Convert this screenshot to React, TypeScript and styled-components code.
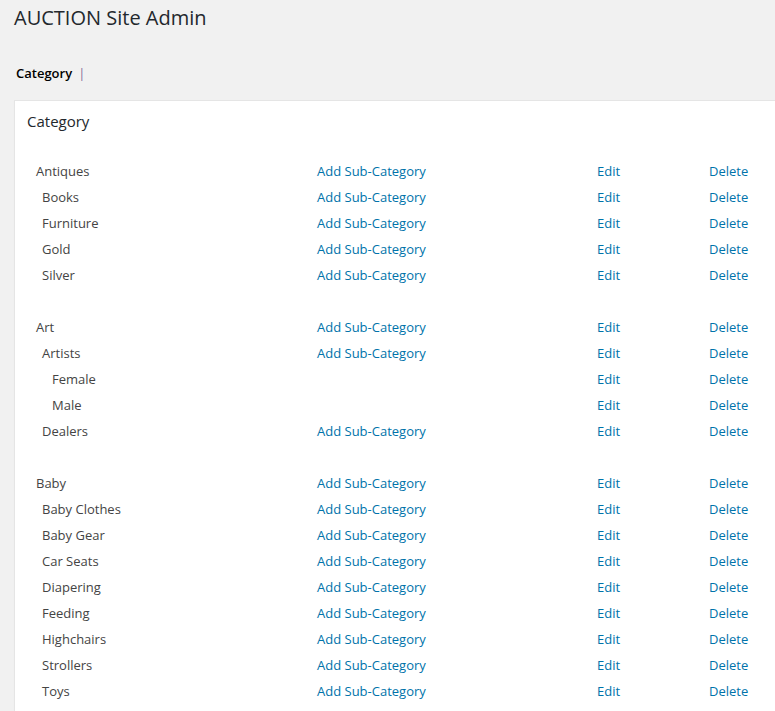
import React from "react";
import styled, { createGlobalStyle } from "styled-components";

type Category = {
  name: string;
  level: number;
  canAdd: boolean;
};

type Group = Category[];

const groups: Group[] = [
  [
    { name: "Antiques", level: 0, canAdd: true },
    { name: "Books", level: 1, canAdd: true },
    { name: "Furniture", level: 1, canAdd: true },
    { name: "Gold", level: 1, canAdd: true },
    { name: "Silver", level: 1, canAdd: true },
  ],
  [
    { name: "Art", level: 0, canAdd: true },
    { name: "Artists", level: 1, canAdd: true },
    { name: "Female", level: 2, canAdd: false },
    { name: "Male", level: 2, canAdd: false },
    { name: "Dealers", level: 1, canAdd: true },
  ],
  [
    { name: "Baby", level: 0, canAdd: true },
    { name: "Baby Clothes", level: 1, canAdd: true },
    { name: "Baby Gear", level: 1, canAdd: true },
    { name: "Car Seats", level: 1, canAdd: true },
    { name: "Diapering", level: 1, canAdd: true },
    { name: "Feeding", level: 1, canAdd: true },
    { name: "Highchairs", level: 1, canAdd: true },
    { name: "Strollers", level: 1, canAdd: true },
    { name: "Toys", level: 1, canAdd: true },
  ],
];

const indents = [0, 6, 16];

const App: React.FC = () => {
  return (
    <>
      <GlobalStyle />
      <Page>
        <Title>AUCTION Site Admin</Title>
        <SubNav>
          <NavCurrent>Category</NavCurrent>
          <NavSep>|</NavSep>
        </SubNav>
        <Panel>
          <PanelTitle>Category</PanelTitle>
          <List>
            {groups.map((group, gi) => (
              <React.Fragment key={gi}>
                {gi > 0 && <Spacer />}
                {group.map((cat) => (
                  <Row key={cat.name}>
                    <Name $indent={indents[cat.level]}>{cat.name}</Name>
                    <span>{cat.canAdd && <Action href="#">Add Sub-Category</Action>}</span>
                    <span>
                      <Action href="#">Edit</Action>
                    </span>
                    <span>
                      <Action href="#">Delete</Action>
                    </span>
                  </Row>
                ))}
              </React.Fragment>
            ))}
          </List>
        </Panel>
      </Page>
    </>
  );
};

const GlobalStyle = createGlobalStyle`
  html, body {
    margin: 0;
    padding: 0;
    background: #f1f1f1;
    overflow: hidden;
  }
  body {
    font-family: "Open Sans", "Liberation Sans", sans-serif;
    font-size: 13px;
    color: #444;
  }
`;

const Page = styled.div`
  padding: 0 0 0 14px;
  width: 820px;
`;

const Title = styled.h1`
  margin: 0;
  padding-top: 4px;
  font-size: 20px;
  font-weight: 400;
  line-height: 27px;
  color: #23282d;
`;

const SubNav = styled.div`
  display: flex;
  align-items: center;
  gap: 6px;
  margin-top: 32px;
  padding-left: 2px;
  height: 20px;
`;

const NavCurrent = styled.span`
  font-weight: 600;
  color: #000;
`;

const NavSep = styled.span`
  color: #8a6e99;
`;

const Panel = styled.div`
  margin-top: 17px;
  background: #fff;
  border: 1px solid #e5e5e5;
  box-shadow: 0 1px 1px rgba(0, 0, 0, 0.04);
  padding: 10px 0 40px 12px;
`;

const PanelTitle = styled.h2`
  margin: 0;
  font-size: 15px;
  font-weight: 400;
  line-height: 20px;
  color: #23282d;
`;

const List = styled.div`
  padding: 27px 0 0 9px;
`;

const Row = styled.div`
  display: grid;
  grid-template-columns: 281px 280px 112px 1fr;
  height: 26px;
  line-height: 26px;
`;

const Spacer = styled.div`
  height: 26px;
`;

const Name = styled.span<{ $indent: number }>`
  padding-left: ${(p) => p.$indent}px;
  color: #444;
`;

const Action = styled.a`
  color: #0073aa;
  text-decoration: none;
`;

export default App;
